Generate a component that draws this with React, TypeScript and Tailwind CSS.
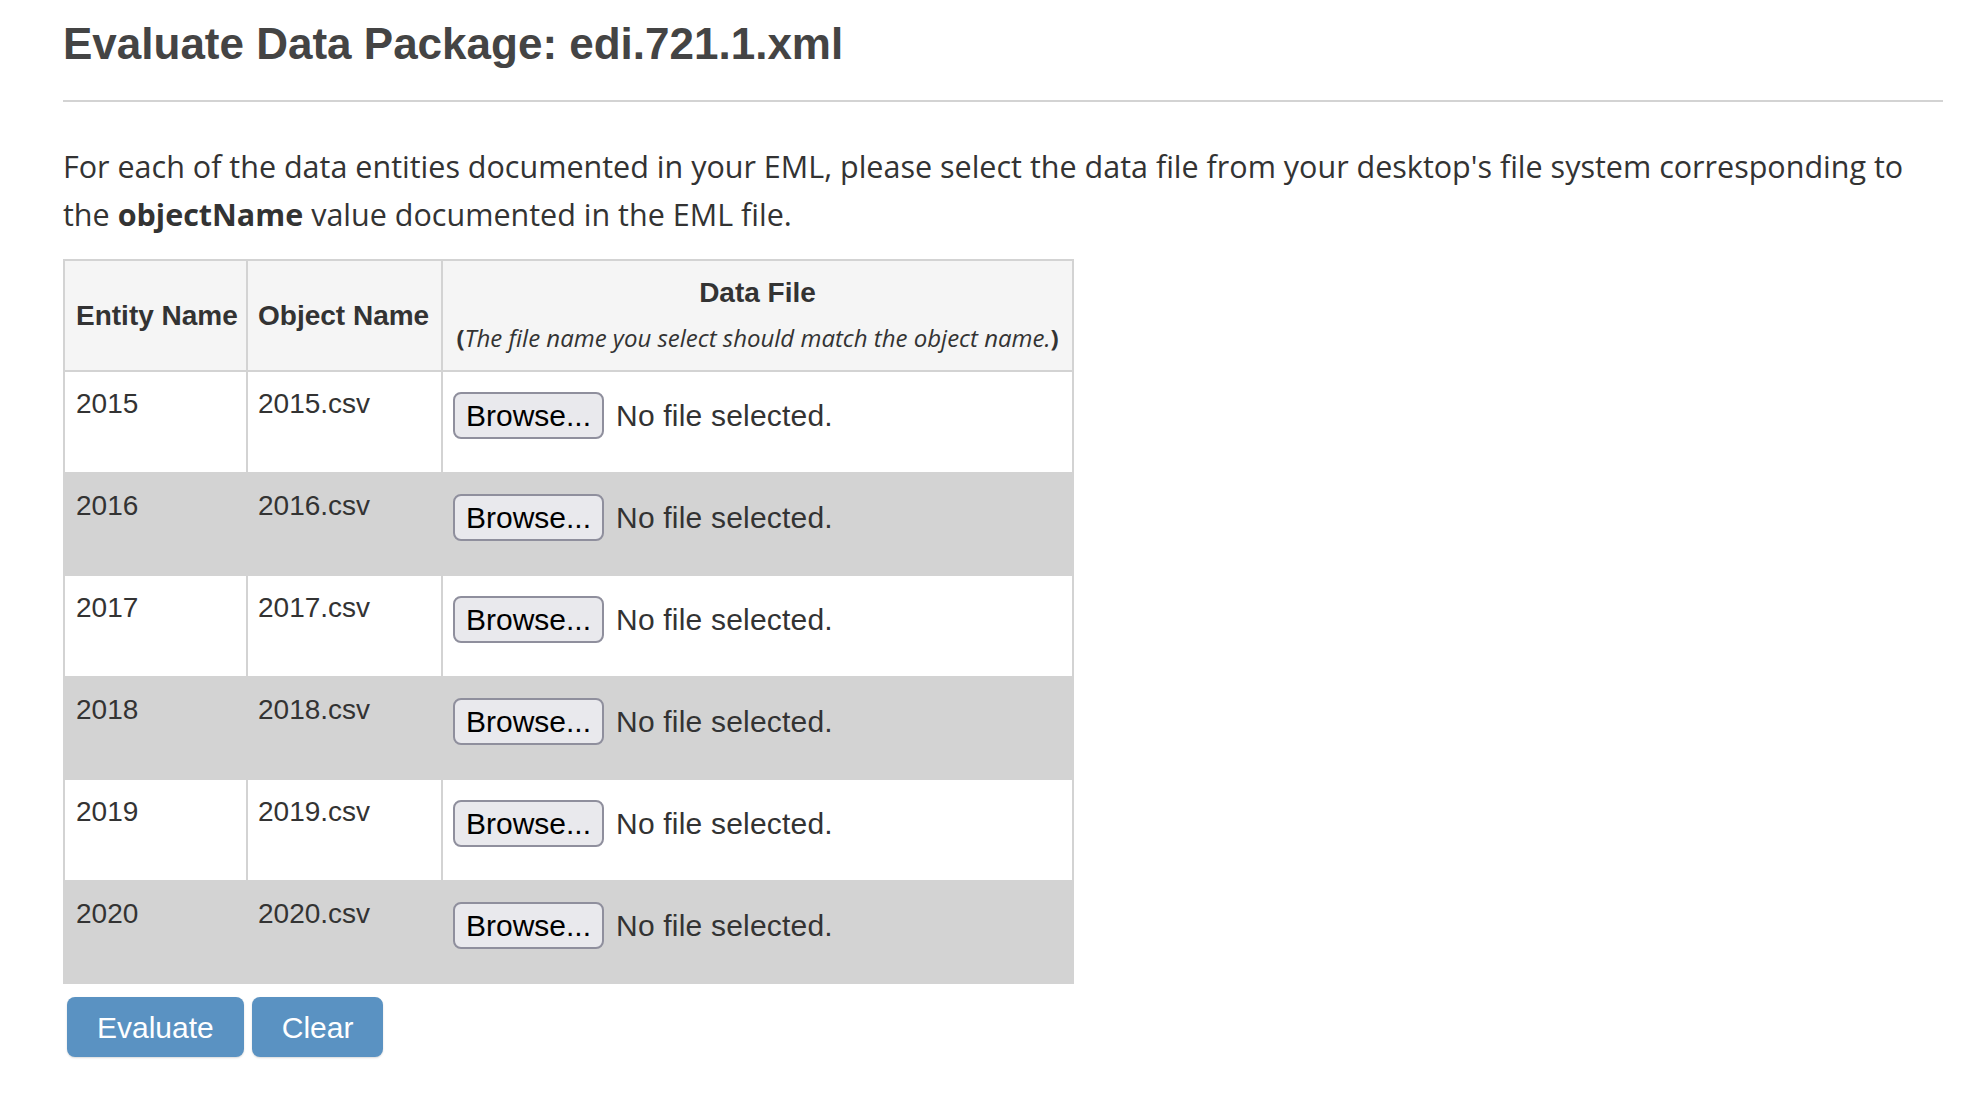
const rows = ["2015", "2016", "2017", "2018", "2019", "2020"]

const FileCell = () => {
  return (
    <div className="flex items-center gap-[12px] pt-[20px]">
      <button className="h-[47px] px-[11px] rounded-[8px] border-2 border-[#8f8f9d] bg-[#e9e9ed] text-black text-[30px] leading-none">
        Browse...
      </button>
      <span className="text-[30px] text-[#333] tracking-[0.2px]">No file selected.</span>
    </div>
  )
}

export default function App() {
  return (
    <div className="min-h-screen bg-white pl-[63px] pr-[38px] font-['Liberation_Sans',Arial,sans-serif]">
      <h1 className="pt-[20px] text-[44px] leading-[48px] font-bold text-[#444]">
        Evaluate Data Package: edi.721.1.xml
      </h1>
      <hr className="mt-[32px] border-0 h-[2px] bg-[#d3d3d3]" />
      <p className="mt-[40px] font-['Open_Sans',sans-serif] text-[30.5px] leading-[48px] text-[#333]">
        For each of the data entities documented in your EML, please select the data file from your desktop's file system corresponding to the <b>objectName</b> value documented in the EML file.
      </p>
      <table className="mt-[21px] w-[1011px] table-fixed border-collapse text-[#333]">
        <thead>
          <tr className="bg-[#f5f5f5]">
            <th className="w-[183px] h-[111px] border-2 border-[#d3d3d3] px-[11px] text-left align-middle text-[28px] font-bold whitespace-nowrap">
              Entity Name
            </th>
            <th className="w-[195px] border-2 border-[#d3d3d3] px-[10px] text-left align-middle text-[28px] font-bold whitespace-nowrap">
              Object Name
            </th>
            <th className="border-2 border-[#d3d3d3] px-[8px] align-top text-center whitespace-nowrap">
              <div className="pt-[12px] text-[28px] leading-[40px] font-bold">Data File</div>
              <div className="mt-[5px] text-[24px] leading-[40px] font-['Open_Sans',sans-serif] font-normal">
                <b>(</b>
                <i>The file name you select should match the object name.</i>
                <b>)</b>
              </div>
            </th>
          </tr>
        </thead>
        <tbody>
          {rows.map((y, i) => (
            <tr key={y} className={i % 2 === 1 ? "bg-[#d3d3d3]" : "bg-white"}>
              <td className="h-[102px] border-2 border-[#d3d3d3] px-[11px] pt-[12px] align-top text-[28px] leading-[40px]">
                {y}
              </td>
              <td className="border-2 border-[#d3d3d3] px-[10px] pt-[12px] align-top text-[28px] leading-[40px]">
                {y}.csv
              </td>
              <td className="border-2 border-[#d3d3d3] px-[10px] align-top">
                <FileCell />
              </td>
            </tr>
          ))}
        </tbody>
      </table>
      <div className="mt-[13px] ml-[4px] flex gap-[8px]">
        <button className="h-[60px] px-[30px] rounded-[8px] bg-[#5a92c2] text-white text-[30px] shadow-[0_1px_2px_rgba(0,0,0,0.15)]">
          Evaluate
        </button>
        <button className="h-[60px] px-[30px] rounded-[8px] bg-[#5a92c2] text-white text-[30px] shadow-[0_1px_2px_rgba(0,0,0,0.15)]">
          Clear
        </button>
      </div>
    </div>
  )
}
